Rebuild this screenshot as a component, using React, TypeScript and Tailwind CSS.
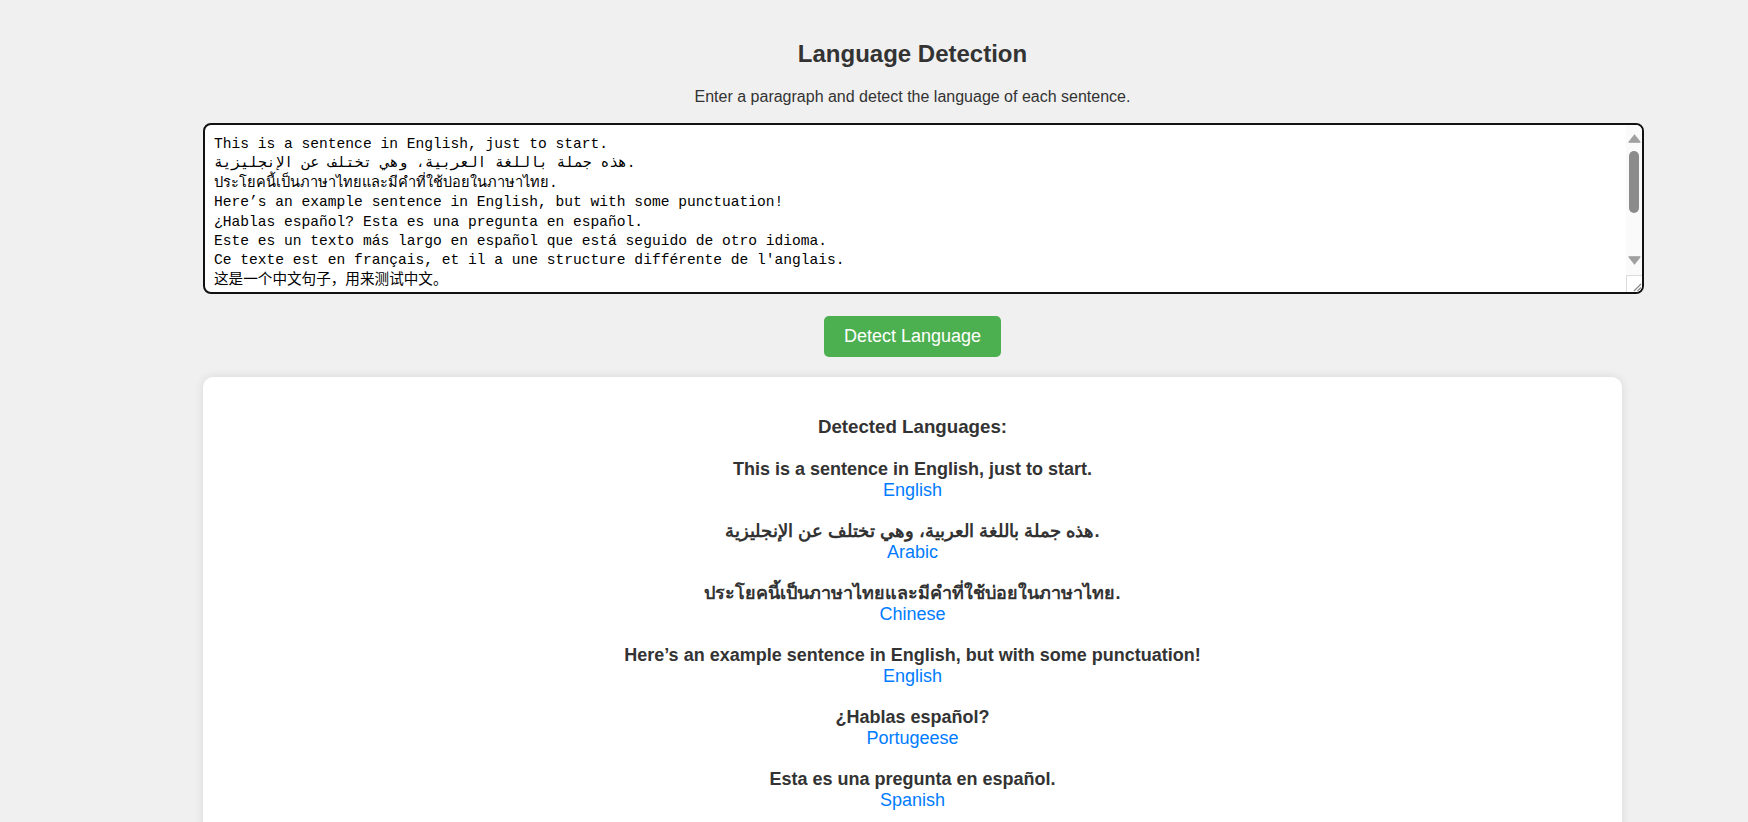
import { useState } from 'react'

interface Detection {
  sentence: string
  language: string
}

const sampleText = `This is a sentence in English, just to start.
هذه جملة باللغة العربية، وهي تختلف عن الإنجليزية.
ประโยคนี้เป็นภาษาไทยและมีคำที่ใช้บ่อยในภาษาไทย.
Here’s an example sentence in English, but with some punctuation!
¿Hablas español? Esta es una pregunta en español.
Este es un texto más largo en español que está seguido de otro idioma.
Ce texte est en français, et il a une structure différente de l'anglais.
这是一个中文句子，用来测试中文。
Это предложение на русском языке.
Dies ist ein deutscher Satz, der etwas länger ist.
Questa è una frase in italiano.
Este é um texto em português do Brasil.
これは日本語の文です。
이것은 한국어 문장입니다.
Dit is een zin in het Nederlands.
Bu bir Türkçe cümledir.
Det här är en mening på svenska.
And finally, one more sentence in English.`

const results: Detection[] = [
  { sentence: 'This is a sentence in English, just to start.', language: 'English' },
  { sentence: 'هذه جملة باللغة العربية، وهي تختلف عن الإنجليزية.', language: 'Arabic' },
  { sentence: 'ประโยคนี้เป็นภาษาไทยและมีคำที่ใช้บ่อยในภาษาไทย.', language: 'Chinese' },
  { sentence: 'Here’s an example sentence in English, but with some punctuation!', language: 'English' },
  { sentence: '¿Hablas español?', language: 'Portugeese' },
  { sentence: 'Esta es una pregunta en español.', language: 'Spanish' },
  { sentence: 'Este es un texto más largo en español que está seguido de otro idioma.', language: 'Spanish' },
  { sentence: "Ce texte est en français, et il a une structure différente de l'anglais.", language: 'French' },
  { sentence: '这是一个中文句子，用来测试中文。', language: 'Chinese' },
]

// fake classic scrollbar drawn over the textarea's right edge
function ScrollbarOverlay() {
  return (
    <div className="pointer-events-none absolute top-[2px] right-[2px] bottom-[2px] w-[16px] flex flex-col rounded-tr-[6px] rounded-br-[6px] overflow-hidden">
      <div className="flex-1 flex flex-col bg-[#fafafa]">
        <div className="h-[18px] flex items-end justify-center">
          <svg width="13" height="9" viewBox="0 0 13 9">
            <path d="M6.5 1 L12 8.2 L1 8.2 Z" fill="#a0a0a0" stroke="#a0a0a0" strokeLinejoin="round" strokeWidth="1.2" />
          </svg>
        </div>
        <div className="mt-[8px] ml-[3px] w-[10px] h-[62px] rounded-full bg-[#8b8b8b]" />
        <div className="flex-1" />
        <div className="h-[9px] mb-[10px] flex items-start justify-center">
          <svg width="13" height="9" viewBox="0 0 13 9">
            <path d="M1 0.8 L12 0.8 L6.5 8 Z" fill="#a0a0a0" stroke="#a0a0a0" strokeLinejoin="round" strokeWidth="1.2" />
          </svg>
        </div>
      </div>
      <div className="h-[17px] bg-white border-l border-t border-[#dcdcdc] flex items-end justify-end">
        <svg width="12" height="12" viewBox="0 0 12 12">
          <path d="M11 4 L4 11 M11 7.5 L7.5 11" stroke="#8a8a8a" strokeWidth="1.2" fill="none" />
        </svg>
      </div>
    </div>
  )
}

export default function App() {
  const [text, setText] = useState(sampleText)

  return (
    <main className="min-h-screen bg-[#f0f0f0] pt-[40px] pb-[40px] text-[#333] font-['Liberation_Sans','Noto_Sans_CJK_SC',Arial,sans-serif]">
      <div className="ml-[203px] w-[1419px] flex flex-col items-center">
        <h1 className="text-[24px] leading-[28px] font-bold">Language Detection</h1>
        <p className="mt-[20px] text-[16px] leading-[18px]">
          Enter a paragraph and detect the language of each sentence.
        </p>

        <div className="relative mt-[17px] self-start w-[1441px] h-[171px]">
          <textarea
            value={text}
            onChange={(e) => setText(e.target.value)}
            className="block w-full h-full resize-none pt-[10px] pb-[9px] pl-[9px] pr-[20px] bg-white border-2 border-[#111] rounded-[8px] text-black text-[14.6px] leading-[19.4px] font-['Liberation_Mono','DejaVu_Sans_Mono','Noto_Sans_CJK_SC',monospace] outline-none overflow-y-hidden"
          />
          <ScrollbarOverlay />
        </div>

        <button
          type="button"
          className="mt-[22px] h-[41px] px-[20px] bg-[#4CAF50] text-white text-[18px] leading-[21px] rounded-[5px] hover:bg-[#45a049]"
        >
          Detect Language
        </button>

        <div className="mt-[20px] w-full bg-white rounded-[10px] shadow-[0_0_10px_rgba(0,0,0,0.1)] p-[20px] flex flex-col items-center text-center">
          <h3 className="mt-[19px] mb-[21px] text-[18.72px] leading-[22px] font-bold">Detected Languages:</h3>
          <div className="flex flex-col items-center gap-[21px]">
            {results.map((r, i) => (
              <div key={i} className="flex flex-col items-center">
                <p className="text-[18px] leading-[20.5px] font-bold">{r.sentence}</p>
                <p className="text-[18px] leading-[20.5px] text-[#007bff]">{r.language}</p>
              </div>
            ))}
          </div>
        </div>
      </div>
    </main>
  )
}
